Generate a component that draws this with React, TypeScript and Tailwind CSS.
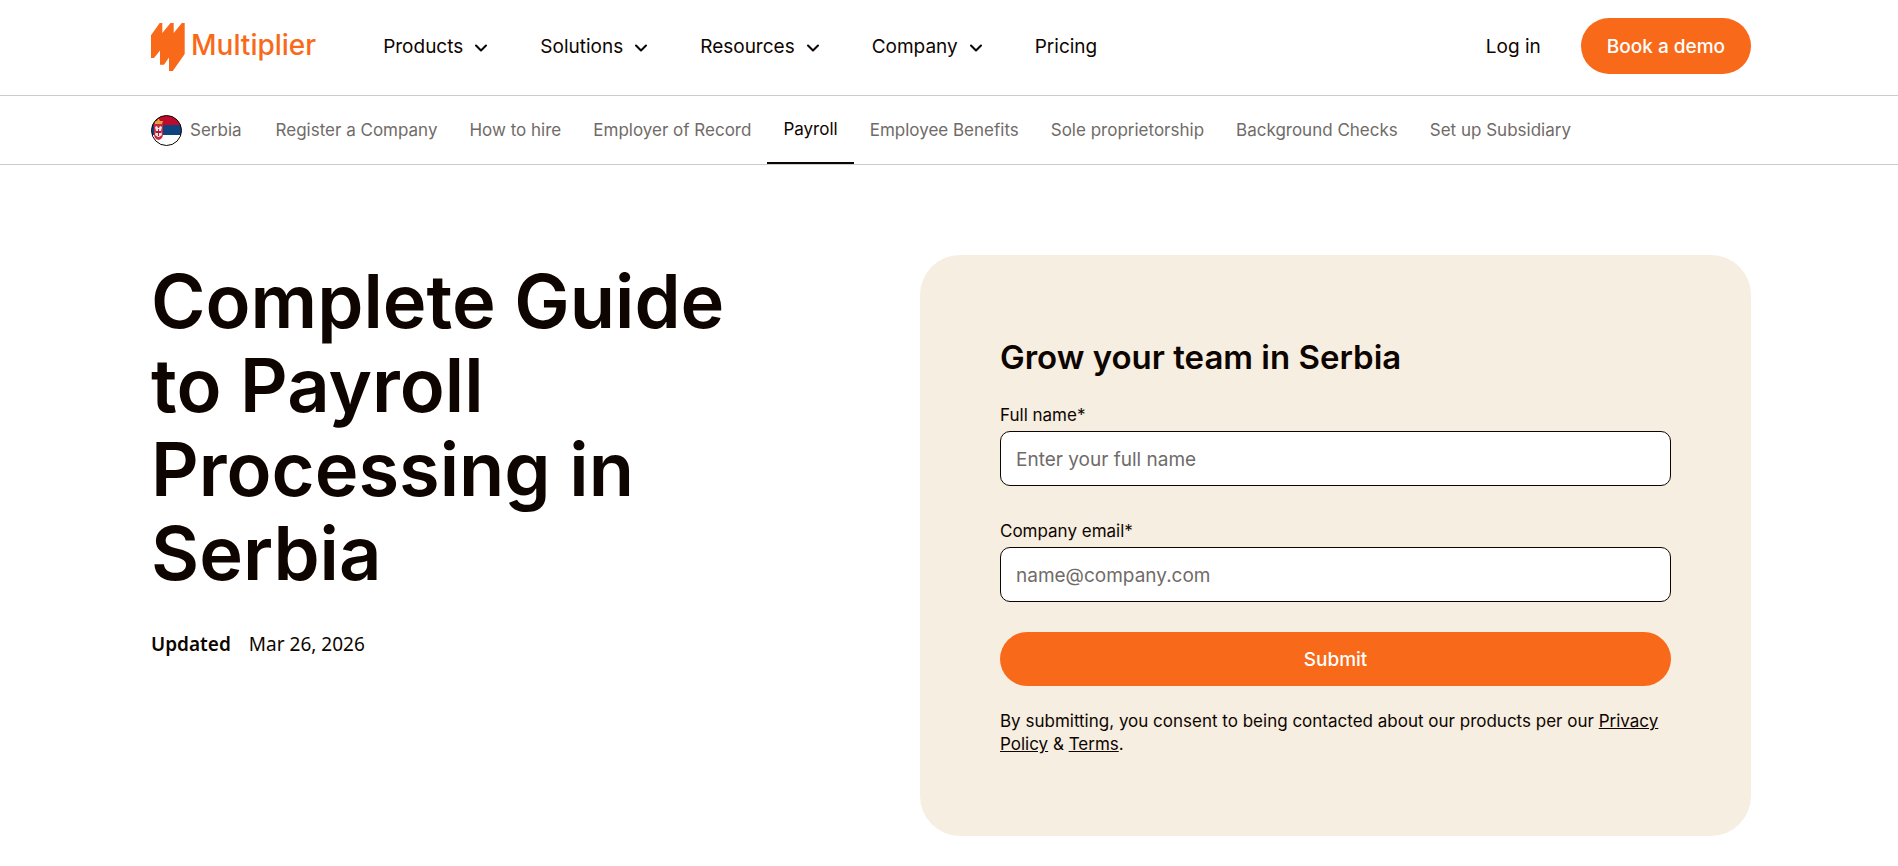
import { ChevronDown } from "lucide-react"

const menus = ["Products", "Solutions", "Resources", "Company"]

const tabs = [
  "Register a Company",
  "How to hire",
  "Employer of Record",
  "Payroll",
  "Employee Benefits",
  "Sole proprietorship",
  "Background Checks",
  "Set up Subsidiary",
]

function Logo() {
  return (
    <a href="#" className="flex items-center gap-[6px] pt-0.5 text-[#f86a1a]">
      <svg width="34" height="48" viewBox="0 0 34 48" fill="currentColor" aria-hidden="true">
        <path d="M0 12.300 8.700 0H11.300V10L19.500 0H22.700V10L30.800 0H33.700V31L21.800 48H18V34.500L13 41.700H9V27.500L3 35H0Z" />
      </svg>
      <span className="pb-1 text-[28px] leading-8 font-medium">Multiplier</span>
    </a>
  )
}

function SerbiaFlag() {
  return (
    <svg width="31" height="31" viewBox="0 0 31 31" aria-hidden="true">
      <defs>
        <clipPath id="flag">
          <circle cx="15.5" cy="15.5" r="15" />
        </clipPath>
      </defs>
      <g clipPath="url(#flag)">
        <rect width="31" height="11" fill="#c00a2c" />
        <rect y="10" width="31" height="11" fill="#0f4380" />
        <rect y="20" width="31" height="11" fill="#fff" />
        <path d="M3 9H12V19Q12 24 7.500 25Q3 24 3 19Z" fill="#c9263f" />
        <path d="M4 12 6 11 7 13H8L9 11 11 12 10 16 11 20 8 22H7L4 20 5 16Z" fill="#f4e6e6" />
        <path d="M7 14H8V16H10V18H8V21H7V18H5V16H7Z" fill="#b01832" />
        <path d="M4 9 3 6 6 6 7 4H8L9 6 12 6 11 9Z" fill="#e0a63c" />
      </g>
      <circle cx="15.5" cy="15.5" r="15" fill="none" stroke="#0e0500" />
    </svg>
  )
}

function Field({ id, label, type, placeholder }: { id: string; label: string; type: string; placeholder: string }) {
  return (
    <div className="flex flex-col gap-1">
      <label htmlFor={id} className="text-[17px] leading-6">
        {label}
      </label>
      <input
        id={id}
        type={type}
        placeholder={placeholder}
        className="h-[55px] w-full rounded-[10px] border border-[#0e0500] bg-white px-[15px] pt-0.5 text-[19px] placeholder:text-[#706b68]"
      />
    </div>
  )
}

export default function App() {
  return (
    <div className="min-h-screen bg-white font-['Inter','Liberation_Sans',sans-serif] text-[#0e0500]">
      <header className="flex items-center border-b border-[#cccccc] pt-[18px] pr-[147px] pb-[21px] pl-[151px]">
        <Logo />
        <nav className="ml-[67px] flex items-center gap-[49px] pt-0.5 text-[19px] leading-7">
          {menus.map((menu) => (
            <button key={menu} type="button" className="flex items-center gap-2">
              {menu}
              <ChevronDown className="mt-0.5 h-5 w-5" strokeWidth={2.5} />
            </button>
          ))}
          <a href="#">Pricing</a>
        </nav>
        <div className="ml-auto flex items-center gap-10 text-[19px] leading-7">
          <a href="#" className="pt-0.5">
            Log in
          </a>
          <button type="button" className="h-14 rounded-full bg-[#f86a1a] px-[26px] pt-0.5 font-medium text-white">
            Book a demo
          </button>
        </div>
      </header>

      <nav className="flex h-[69px] items-stretch border-b border-[#cccccc] pr-[147px] pl-[151px] text-[17px] leading-6 text-[#706b68]">
        <a href="#" className="flex items-center gap-2 pr-[18px]">
          <SerbiaFlag />
          Serbia
        </a>
        {tabs.map((tab) => (
          <a
            key={tab}
            href="#"
            className={
              tab === "Payroll"
                ? "flex items-center border-b-2 border-[#0e0500] px-4 text-[#0e0500]"
                : "flex items-center px-4"
            }
          >
            {tab}
          </a>
        ))}
      </nav>

      <main className="grid grid-cols-[minmax(0,1fr)_minmax(0,831px)] items-start pt-[90px] pr-[147px] pb-8 pl-[151px]">
        <div>
          <h1 className="max-w-[620px] pt-1 text-[74px] leading-[84px] font-semibold">
            Complete Guide to Payroll Processing in Serbia
          </h1>
          <p className="mt-[35px] flex gap-[18px] font-['Noto_Sans',sans-serif] text-[19px] leading-7">
            <span className="font-semibold">Updated</span>
            <span>Mar 26, 2026</span>
          </p>
        </div>

        <section className="rounded-[40px] bg-[#f6eee1] p-20">
          <h2 className="text-[33px] leading-[44px] font-semibold">Grow your team in Serbia</h2>
          <form className="mt-6">
            <div className="flex flex-col gap-[33px]">
              <Field id="full-name" label="Full name*" type="text" placeholder="Enter your full name" />
              <Field id="company-email" label="Company email*" type="email" placeholder="name@company.com" />
            </div>
            <button
              type="submit"
              className="mt-[30px] h-[54px] w-full rounded-full bg-[#f86a1a] pt-0.5 text-[19px] font-medium text-white"
            >
              Submit
            </button>
            <p className="mt-6 text-[17px] leading-[23px]">
              By submitting, you consent to being contacted about our products per our{" "}
              <a href="#" className="underline">
                Privacy Policy
              </a>{" "}
              &amp;{" "}
              <a href="#" className="underline">
                Terms
              </a>
              .
            </p>
          </form>
        </section>
      </main>
    </div>
  )
}
